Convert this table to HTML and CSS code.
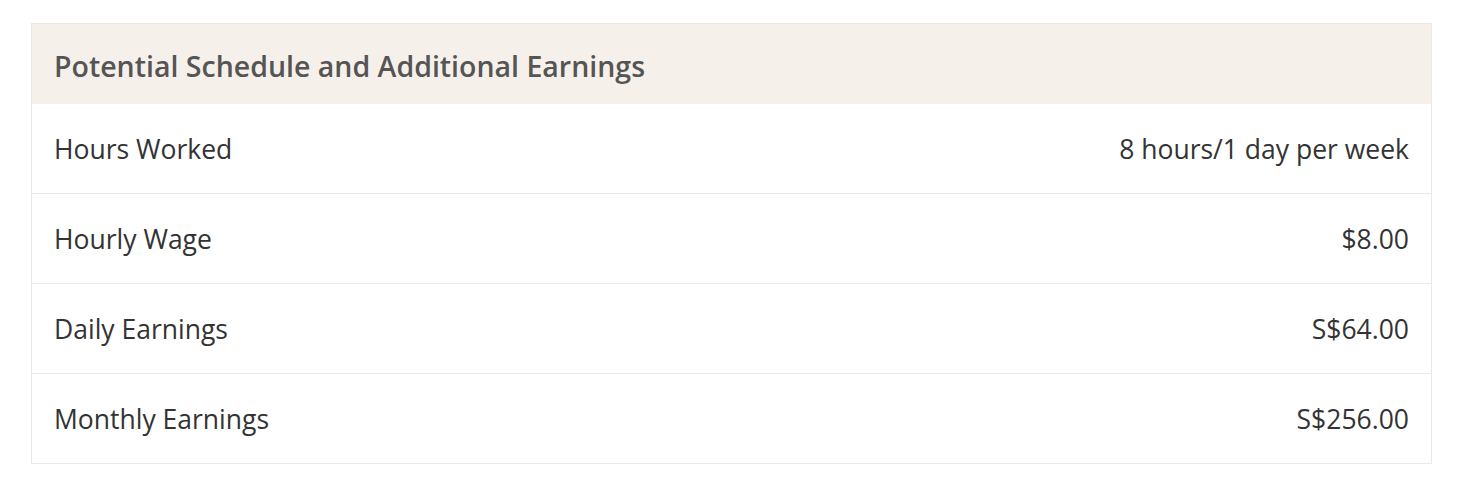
FILE: index.html
```html
<!DOCTYPE html>
<html>
<head>
<meta charset="utf-8">
<link rel="stylesheet" href="styles.css">
</head>
<body>
<div class="card">
  <div class="card-head">Potential Schedule and Additional Earnings</div>
  <div class="row"><span>Hours Worked</span><span>8 hours/1 day per week</span></div>
  <div class="row"><span>Hourly Wage</span><span>$8.00</span></div>
  <div class="row"><span>Daily Earnings</span><span>S$64.00</span></div>
  <div class="row"><span>Monthly Earnings</span><span>S$256.00</span></div>
</div>
</body>
</html>
```
FILE: styles.css
```css
html, body { margin: 0; background: #fff; }
body { padding: 23px 28px 0 31px; font-family: "Open Sans", Lato, sans-serif; }
.card {
  border: 1px solid #ece9e0;
  width: 1399px;
}
.card-head {
  background: #f5f1ea;
  height: 80px;
  box-sizing: border-box;
  display: flex;
  align-items: center;
  padding: 4px 22px 0;
  font-size: 28.5px;
  font-weight: 600;
  color: #555;
}
.row {
  height: 89px;
  display: flex;
  align-items: center;
  justify-content: space-between;
  padding: 0 22px;
  font-size: 26.5px;
  color: #333;
}
.row + .row { border-top: 1px solid #e9e9e9; }
```
